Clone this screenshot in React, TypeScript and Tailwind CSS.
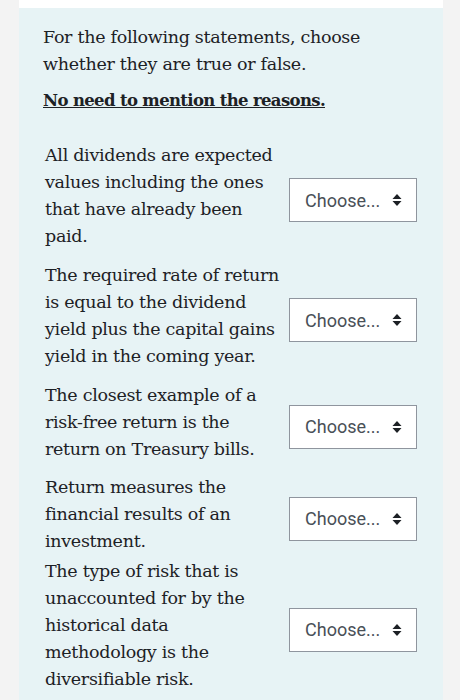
import React from 'react';

const statements = [
  ['All dividends are expected', 'values including the ones', 'that have already been', 'paid.'],
  ['The required rate of return', 'is equal to the dividend', 'yield plus the capital gains', 'yield in the coming year.'],
  ['The closest example of a', 'risk-free return is the', 'return on Treasury bills.'],
  ['Return measures the', 'financial results of an', 'investment.'],
  ['The type of risk that is', 'unaccounted for by the', 'historical data', 'methodology is the', 'diversifiable risk.'],
];

// gap above each statement row
const rowGap = ['', 'mt-[12px]', 'mt-[12px]', 'mt-[11px]', 'mt-[3px]'];

const slab = { fontFamily: '"DejaVu Serif", "Liberation Serif", serif' };

const ChooseSelect = () => (
  <div className="w-[128px] h-[44px] shrink-0 bg-white border border-[#8f959e] flex items-center pl-[15px] pr-[12px] justify-between">
    <span className="text-[18px] text-[#495057] font-['Roboto',sans-serif]">Choose...</span>
    <svg width="10" height="14" viewBox="0 0 10 14" className="mr-[2px]">
      <path d="M5 1 L9.5 6 H0.5 Z" fill="#1d2125" />
      <path d="M5 13 L9.5 8 H0.5 Z" fill="#1d2125" />
    </svg>
  </div>
);

export default function App() {
  return (
    <div className="min-h-[700px] bg-[#f3f3f3] pl-[19px] pr-[17px]">
      <div className="h-[8px] bg-white" />
      <div className="bg-[#e7f3f5] pl-[24px] pr-[26px] pt-[16px] pb-[20px] text-[#1d2125]" style={slab}>
        <p className="text-[17.5px] leading-[27px] tracking-[-0.3px]">
          For the following statements, choose<br />whether they are true or false.
        </p>
        <p className="mt-[9px] text-[16.5px] leading-[27px] font-bold underline tracking-[-0.65px]">
          No need to mention the reasons.
        </p>
        <div className="mt-[28px] flex flex-col">
          {statements.map((lines, i) => (
            <div key={i} className={`flex items-center justify-between pl-[2px] ${rowGap[i]}`}>
              <p className="text-[17.5px] leading-[27px] tracking-[-0.3px]">
                {lines.map((l, j) => (
                  <React.Fragment key={j}>
                    {l}
                    {j < lines.length - 1 && <br />}
                  </React.Fragment>
                ))}
              </p>
              <div className="pt-[8px]">
                <ChooseSelect />
              </div>
            </div>
          ))}
        </div>
      </div>
    </div>
  );
}
